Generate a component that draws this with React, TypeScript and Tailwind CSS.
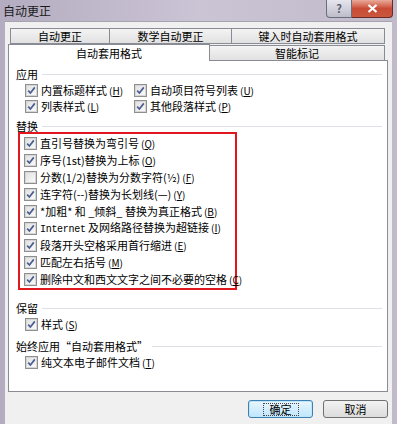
import React from 'react';

const font = "font-['Noto_Sans_CJK_SC','Noto_Sans',sans-serif]";

function Box({ checked = true }: { checked?: boolean }) {
  return (
    <span className="w-[13px] h-[13px] border border-[#8e8f8f] bg-white flex items-center justify-center shrink-0">
      <span className="w-[11px] h-[11px] border border-[#d6d6d6] bg-gradient-to-br from-[#e2e2e2] to-[#fafafa] flex items-center justify-center">
        {checked && (
          <svg width="9" height="9" viewBox="0 0 9 9">
            <path d="M1.2 4.6 L3.4 7 L7.8 1.4" fill="none" stroke="#4a5e8f" strokeWidth="1.7" />
          </svg>
        )}
      </span>
    </span>
  );
}

function Opt({ label, k, checked = true, h = 'h-[16px]' }: { label: React.ReactNode; k: string; checked?: boolean; h?: string }) {
  return (
    <div className={`flex items-center gap-[3px] ${h} whitespace-nowrap`}>
      <Box checked={checked} />
      <span className="leading-none">
        {label}
        <span className="text-[10px] ml-[2px]">(<span className="underline">{k}</span>)</span>
      </span>
    </div>
  );
}

function Header({ text, className = '' }: { text: string; className?: string }) {
  return (
    <div className={`flex items-center h-[12px] leading-[12px] ${className}`}>
      <span className="whitespace-nowrap">{text}</span>
      <span className="flex-1 ml-[4px] border-t border-[#dde1e6]" />
    </div>
  );
}

const tabBg = 'bg-gradient-to-b from-[#f4f4f4] to-[#e1e1e1]';

export default function App() {
  return (
    <div className={`w-[397px] h-[424px] overflow-hidden flex flex-col bg-gradient-to-r from-[#b4acc0] via-[#cbc4d5] to-[#c1bacb] text-[11px] text-black ${font}`}>
      {/* title bar */}
      <div className="h-[21px] flex justify-between shrink-0">
        <span className="pl-[3px] pt-[2px] text-[12px] text-[#1a1a1a]">自动更正</span>
        <div className="flex mr-[4px]">
          <div className="w-[26px] h-[18px] rounded-bl-[4px] border border-t-0 border-[#6c6e7c] bg-gradient-to-b from-[#e7e6ee] to-[#bdbcca] flex items-center justify-center text-[11px] font-bold text-[#5a5d6e]">
            ?
          </div>
          <div className="w-[41px] h-[18px] rounded-br-[4px] border border-t-0 border-l-0 border-[#6b2a22] bg-gradient-to-b from-[#e9a99a] via-[#c94b36] to-[#c9573d] flex items-center justify-center">
            <svg width="11" height="9" viewBox="0 0 11 9">
              <path d="M1.5 1 L9.5 8 M9.5 1 L1.5 8" stroke="#fff" strokeWidth="2.2" />
            </svg>
          </div>
        </div>
      </div>

      {/* body */}
      <div className="flex-1 mx-[5px] bg-[#f0f0f0] border-t border-[#a8a3b0] pl-[3px] pr-[4px] pt-[6px] flex flex-col">
        {/* tab row 1 */}
        <div className="flex ml-[2px] h-[16px]">
          <div className={`w-[100px] border border-[#898c95] ${tabBg} flex items-center justify-center leading-none`}>自动更正</div>
          <div className={`w-[122px] border border-l-0 border-[#898c95] ${tabBg} flex items-center justify-center leading-none`}>数学自动更正</div>
          <div className={`w-[153px] border border-l-0 border-[#898c95] ${tabBg} flex items-center justify-center leading-none`}>键入时自动套用格式</div>
        </div>
        {/* tab row 2 */}
        <div className="flex h-[16px] items-end relative z-10">
          <div className="w-[202px] h-[17px] -mb-px border border-b-0 border-[#898c95] bg-white flex items-center justify-center leading-none">
            自动套用格式
          </div>
          <div className={`w-[175px] h-[15px] border border-l-0 border-b-0 border-[#898c95] ${tabBg} flex items-center justify-center leading-none`}>
            智能标记
          </div>
        </div>

        {/* panel */}
        <div className="h-[332px] bg-white border border-[#898c95] pl-[7px] pr-[5px] pt-[7px] flex flex-col">
          <Header text="应用" />
          <div className="pl-[9px] mt-[2px] grid grid-cols-[109px_1fr]">
            <Opt label="内置标题样式" k="H" />
            <Opt label="自动项目符号列表" k="U" />
            <Opt label="列表样式" k="L" />
            <Opt label="其他段落样式" k="P" />
          </div>
          <Header text="替换" className="mt-[6px]" />
          <div className="ml-[2px] w-[219px] border-2 border-[#e2161d] pt-[1px] pl-[4px] pb-0">
            <Opt h="h-[17px]" label="直引号替换为弯引号" k="Q" />
            <Opt h="h-[17px]" label="序号(1st)替换为上标" k="O" />
            <Opt h="h-[17px]" checked={false} label="分数(1/2)替换为分数字符(½)" k="F" />
            <Opt h="h-[17px]" label="连字符(--)替换为长划线(—)" k="Y" />
            <Opt h="h-[17px]" label="*加粗* 和 _倾斜_ 替换为真正格式" k="B" />
            <Opt
              h="h-[17px]"
              label={
                <>
                  <span className="font-['Liberation_Mono',monospace] text-[10px] tracking-[-0.3px]">Internet</span> 及网络路径替换为超链接
                </>
              }
              k="I"
            />
            <Opt h="h-[17px]" label="段落开头空格采用首行缩进" k="E" />
            <Opt h="h-[17px]" label="匹配左右括号" k="M" />
            <Opt h="h-[17px]" label="删除中文和西文文字之间不必要的空格" k="C" />
          </div>
          <Header text="保留" className="mt-[12px]" />
          <div className="pl-[9px] mt-[2px]">
            <Opt label="样式" k="S" />
          </div>
          <Header text="始终应用“自动套用格式”" className="mt-[8px]" />
          <div className="pl-[9px] mt-[2px]">
            <Opt label="纯文本电子邮件文档" k="T" />
          </div>
        </div>

        {/* buttons */}
        <div className="flex justify-end gap-[10px] mt-[8px] pr-0">
          <button className="w-[65px] h-[18px] rounded-[3px] border border-[#3c7fb1] bg-gradient-to-b from-[#eaf6fd] to-[#bee6fd] flex items-center justify-center leading-none shadow-[inset_0_0_0_1px_#bfe5f8]">
            <span className="px-[6px] border border-dotted border-[#444]">确定</span>
          </button>
          <button className="w-[65px] h-[18px] rounded-[3px] border border-[#707070] bg-gradient-to-b from-[#f2f2f2] to-[#dcdcdc] flex items-center justify-center leading-none">
            取消
          </button>
        </div>
      </div>
    </div>
  );
}
